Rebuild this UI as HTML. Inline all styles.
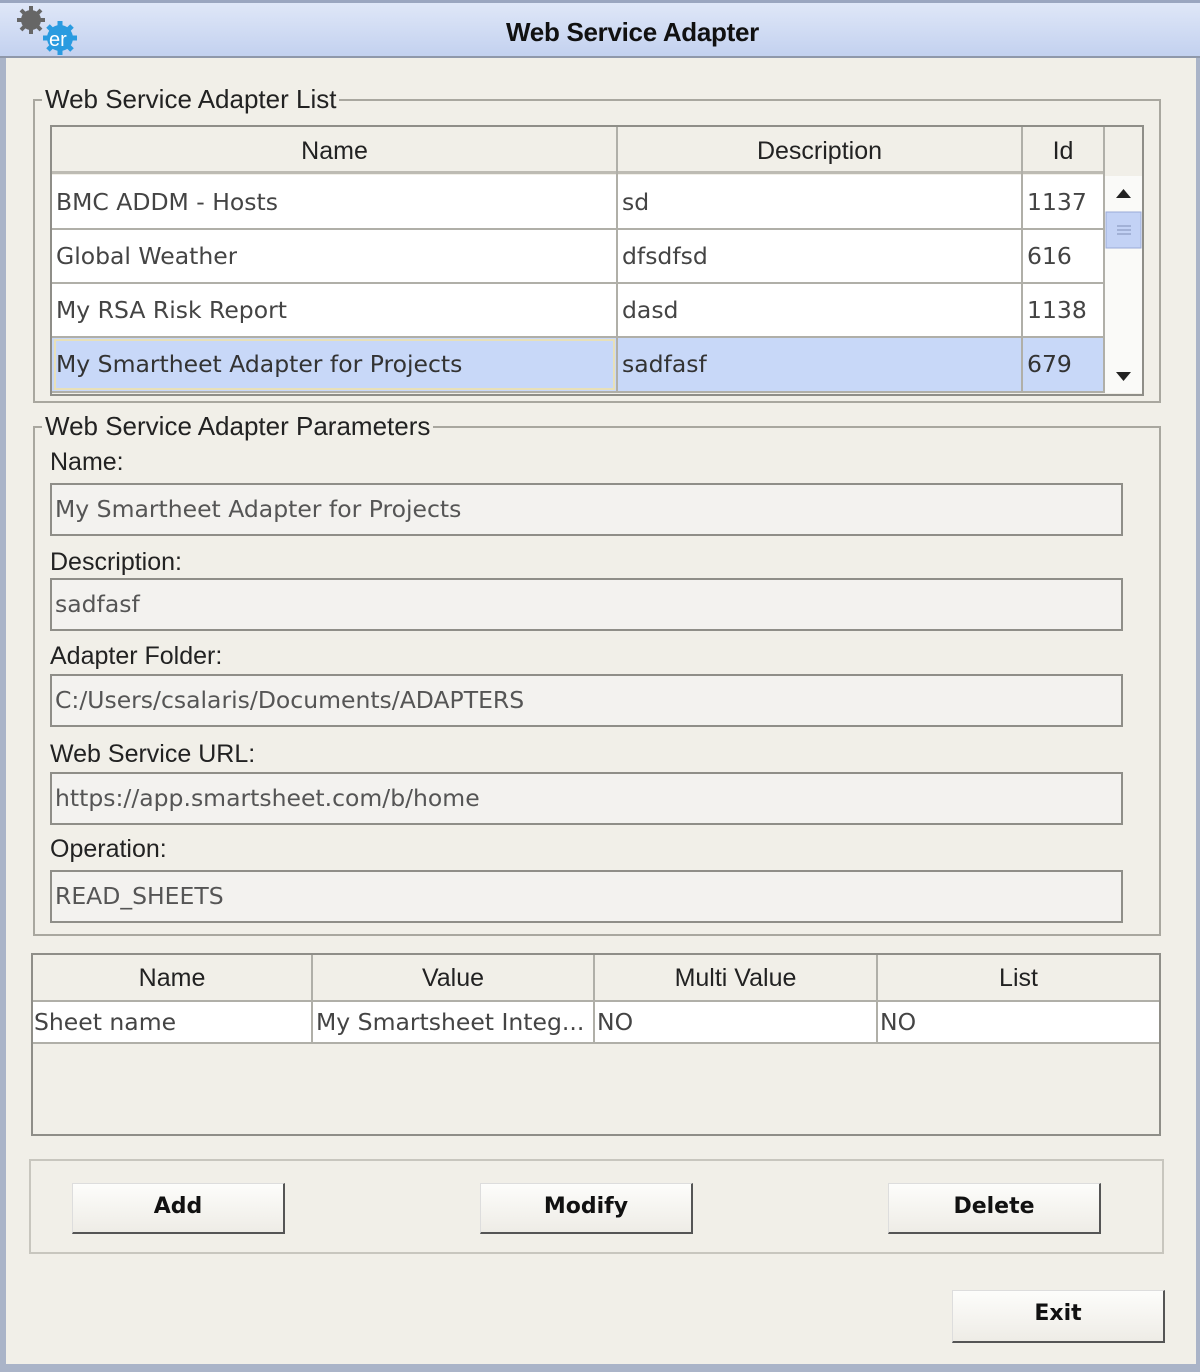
<!DOCTYPE html>
<html><head><meta charset="utf-8"><style>
*{box-sizing:border-box;margin:0;padding:0}
body{width:1200px;height:1372px;background:#f1efe8;position:relative;overflow:hidden;font-family:"Liberation Sans",sans-serif;color:#222}
.a{position:absolute}
.title{left:0;top:0;width:1200px;height:58px;background:linear-gradient(#dfe7f8,#c3d1ef);border-top:3px solid #9aa6c0;border-bottom:2px solid #8f98aa}
.ttl{left:0;width:1265px;top:17px;text-align:center;font-size:26px;font-weight:bold;color:#111;letter-spacing:-0.3px}
.lb{position:absolute;left:0;top:58px;width:6px;height:1314px;background:#aab4c8}
.rb{position:absolute;right:0;top:58px;width:4px;height:1314px;background:#aab4c8}
.bb{position:absolute;left:0;top:1364px;width:1200px;height:8px;background:#aab4c8}
.grp{border:2px solid #a9a79f}
.leg{background:#f1efe8;font-size:26px;padding:0 3px;color:#222}
.cell{position:absolute;font-family:"DejaVu Sans",sans-serif;font-size:23.5px;color:#444;white-space:nowrap;overflow:hidden;padding-left:4px;line-height:53px}
.hd{position:absolute;text-align:center;font-size:25px;color:#222}
.lab{position:absolute;left:50px;font-size:25px;color:#222}
.fld{position:absolute;left:50px;width:1073px;height:53px;background:#f3f2ef;border:2px solid #8f8e88;font-family:"DejaVu Sans",sans-serif;font-size:23.5px;color:#555;padding-left:3px;line-height:48px}
.btn{position:absolute;height:51px;width:213px;background:linear-gradient(#fdfdfb,#eeece6);border-right:2px solid #555;border-bottom:2px solid #555;border-top:1px solid #ddd;border-left:1px solid #ddd;text-align:center;font-family:"DejaVu Sans",sans-serif;font-weight:bold;font-size:22px;line-height:46px;color:#111}
</style></head><body>
<div class="a title"></div>
<div class="a ttl">Web Service Adapter</div>
<svg class="a" style="left:15px;top:4px" width="65" height="52" viewBox="0 0 65 52">
<g fill="#666"><circle cx="16" cy="16" r="10"/><g stroke="#666" stroke-width="4"><line x1="16" y1="2" x2="16" y2="30"/><line x1="2" y1="16" x2="30" y2="16"/><line x1="6" y1="6" x2="26" y2="26"/><line x1="26" y1="6" x2="6" y2="26"/></g></g>
<g fill="#2a9be0"><circle cx="45" cy="34" r="13"/><g stroke="#2a9be0" stroke-width="5"><line x1="45" y1="17" x2="45" y2="51"/><line x1="28" y1="34" x2="62" y2="34"/><line x1="33" y1="22" x2="57" y2="46"/><line x1="57" y1="22" x2="33" y2="46"/></g></g>
<text x="34" y="42" font-family="Liberation Sans" font-size="20" fill="#fff">er</text>
</svg>
<div class="lb"></div><div class="rb"></div><div class="bb"></div>

<div class="a grp" style="left:33px;top:99px;width:1128px;height:304px"></div>
<div class="a leg" style="left:42px;top:84px">Web Service Adapter List</div>
<div class="a" style="left:50px;top:125px;width:1094px;height:271px;border:2px solid #8f8e88;background:#f1efe8"></div>
<div class="a" style="left:52px;top:127px;width:1052px;height:47px;background:#f1efe8;border-bottom:3px solid #bdbbb3"></div>
<div class="hd" style="left:52px;top:137px;width:565px">Name</div>
<div class="hd" style="left:617px;top:137px;width:405px">Description</div>
<div class="hd" style="left:1022px;top:137px;width:82px">Id</div>
<div class="a" style="left:52px;top:175px;width:1052px;height:218px;background:#fff"></div>
<div class="a" style="left:52px;top:337px;width:1052px;height:55px;background:#c8d8f8"></div>
<div class="a" style="left:54px;top:339px;width:561px;height:51px;border:2px solid #e8e0b8"></div>
<div class="a" style="left:52px;top:228px;width:1052px;height:2px;background:#b0afa8"></div>
<div class="a" style="left:52px;top:282px;width:1052px;height:2px;background:#b0afa8"></div>
<div class="a" style="left:52px;top:336px;width:1052px;height:2px;background:#b0afa8"></div>
<div class="a" style="left:52px;top:391px;width:1052px;height:2px;background:#b0afa8"></div>
<div class="a" style="left:616px;top:127px;width:2px;height:266px;background:#b0afa8"></div>
<div class="a" style="left:1021px;top:127px;width:2px;height:266px;background:#b0afa8"></div>
<div class="a" style="left:1103px;top:127px;width:2px;height:266px;background:#b0afa8"></div>
<div class="cell" style="left:52px;top:176px;width:560px">BMC ADDM - Hosts</div>
<div class="cell" style="left:618px;top:176px">sd</div>
<div class="cell" style="left:1023px;top:176px">1137</div>
<div class="cell" style="left:52px;top:230px">Global Weather</div>
<div class="cell" style="left:618px;top:230px">dfsdfsd</div>
<div class="cell" style="left:1023px;top:230px">616</div>
<div class="cell" style="left:52px;top:284px">My RSA Risk Report</div>
<div class="cell" style="left:618px;top:284px">dasd</div>
<div class="cell" style="left:1023px;top:284px">1138</div>
<div class="cell" style="left:52px;top:338px;color:#333">My Smartheet Adapter for Projects</div>
<div class="cell" style="left:618px;top:338px;color:#333">sadfasf</div>
<div class="cell" style="left:1023px;top:338px;color:#333">679</div>
<div class="a" style="left:1105px;top:176px;width:37px;height:217px;background:#fafaf8"></div>
<svg class="a" style="left:1105px;top:176px" width="37" height="217"><polygon points="11,22 26,22 18.5,13" fill="#222"/><rect x="1" y="36" width="35" height="36" fill="#c3d2f5" stroke="#9aaad8"/><g stroke="#8090b8"><line x1="12" y1="50" x2="26" y2="50"/><line x1="12" y1="54" x2="26" y2="54"/><line x1="12" y1="58" x2="26" y2="58"/></g><polygon points="11,196 26,196 18.5,205" fill="#222"/></svg>

<div class="a grp" style="left:33px;top:426px;width:1128px;height:510px"></div>
<div class="a leg" style="left:42px;top:411px">Web Service Adapter Parameters</div>
<div class="lab" style="top:448px">Name:</div>
<div class="fld" style="top:483px">My Smartheet Adapter for Projects</div>
<div class="lab" style="top:548px">Description:</div>
<div class="fld" style="top:578px">sadfasf</div>
<div class="lab" style="top:642px">Adapter Folder:</div>
<div class="fld" style="top:674px">C:/Users/csalaris/Documents/ADAPTERS</div>
<div class="lab" style="top:740px">Web Service URL:</div>
<div class="fld" style="top:772px">https://app.smartsheet.com/b/home</div>
<div class="lab" style="top:835px">Operation:</div>
<div class="fld" style="top:870px">READ_SHEETS</div>

<div class="a" style="left:31px;top:953px;width:1130px;height:183px;border:2px solid #8f8e88"></div>
<div class="a" style="left:33px;top:1000px;width:1126px;height:44px;background:#fff;border-top:2px solid #b0afa8;border-bottom:2px solid #b0afa8"></div>
<div class="a" style="left:311px;top:955px;width:2px;height:89px;background:#b0afa8"></div>
<div class="a" style="left:593px;top:955px;width:2px;height:89px;background:#b0afa8"></div>
<div class="a" style="left:876px;top:955px;width:2px;height:89px;background:#b0afa8"></div>
<div class="hd" style="left:33px;top:964px;width:278px">Name</div>
<div class="hd" style="left:313px;top:964px;width:280px">Value</div>
<div class="hd" style="left:595px;top:964px;width:281px">Multi Value</div>
<div class="hd" style="left:878px;top:964px;width:281px">List</div>
<div class="cell" style="left:30px;top:997px;line-height:50px">Sheet name</div>
<div class="cell" style="left:312px;top:997px;line-height:50px;width:282px">My Smartsheet Integ...</div>
<div class="cell" style="left:593px;top:997px;line-height:50px">NO</div>
<div class="cell" style="left:876px;top:997px;line-height:50px">NO</div>

<div class="a" style="left:29px;top:1159px;width:1135px;height:95px;border:2px solid #c8c6be"></div>
<div class="btn" style="left:72px;top:1183px">Add</div>
<div class="btn" style="left:480px;top:1183px">Modify</div>
<div class="btn" style="left:888px;top:1183px">Delete</div>
<div class="btn" style="left:952px;top:1290px;height:53px">Exit</div>
</body></html>
